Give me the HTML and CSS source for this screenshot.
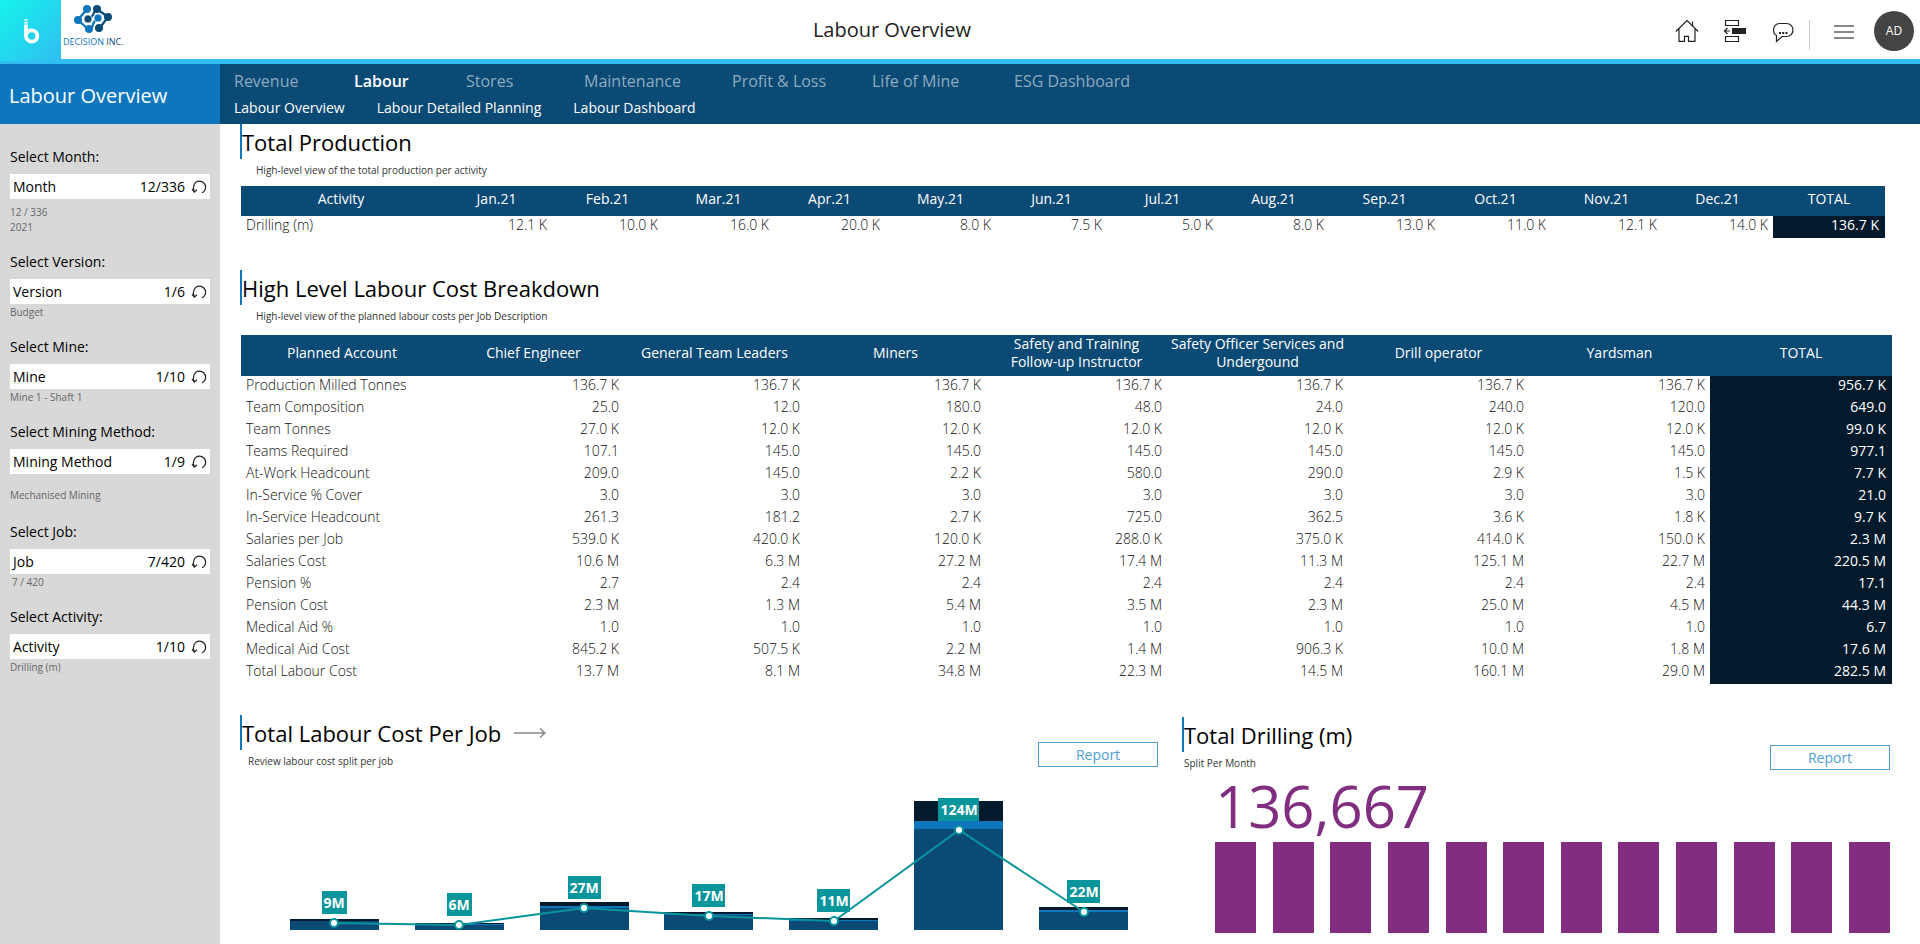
FILE: index.html
```html
<!DOCTYPE html>
<html lang="en">
<head>
<meta charset="utf-8">
<title>Labour Overview</title>
<link rel="stylesheet" href="styles.css">
</head>
<body>
<header class="topbar">
  <div class="brand">
    <a class="brand-tile" href="#" aria-label="Home page">
      <svg width="18" height="26" viewBox="0 0 18 26"><path d="M1.200 1h3.600M1.200 3.800h3.600" stroke="#fff" stroke-width="1.500"/><path d="M3 5.500V17" stroke="#fff" stroke-width="3.800"/><circle cx="8.700" cy="17" r="5.700" fill="none" stroke="#fff" stroke-width="3.800"/></svg>
    </a>
    <a class="company" href="#">
      <svg width="40" height="30" viewBox="0 0 40 30">
        <g fill="none" stroke-width="2.200">
          <path d="M14 5 5 16l11 10c6-2 1-7 9-12" stroke="#0d76bd"/>
          <path d="M24 5l11 8-9 12M24 5c-5 2-1 7-9 10" stroke="#0b4a75"/>
        </g>
        <g fill="#0d76bd"><circle cx="14" cy="5" r="4"/><circle cx="5" cy="16" r="4"/><circle cx="16" cy="25" r="4"/><circle cx="25" cy="14" r="4" stroke="#fff" stroke-width=".6"/></g>
        <g fill="#0b4a75"><circle cx="24" cy="5" r="4"/><circle cx="35" cy="13" r="4"/><circle cx="26" cy="24" r="4"/><circle cx="15" cy="15" r="4" stroke="#fff" stroke-width=".6"/></g>
      </svg>
      <span class="company-name">DECISION <b>INC.</b></span>
    </a>
  </div>
  <h1 class="page-title">Labour Overview</h1>
  <div class="tools">
    <button class="icon-btn" aria-label="Home"><svg width="24" height="24" viewBox="0 0 24 24" fill="none" stroke="#222" stroke-width="1.200"><path d="M.8 12.500 12 1.500l11.200 11M17.500 6.800V2.500M4 10v12.400h5.500v-5h4v5h6.500V10"/></svg></button>
    <button class="icon-btn" aria-label="Structure"><svg width="24" height="24" viewBox="0 0 24 24" fill="none" stroke="#222" stroke-width="1.200"><path d="M2.500 1.500h13v5h-13zM2.500 17.500h13v5h-13zM1.500 12H7M4.500 9l-3 3 3 3"/><path d="M9 9h14v6H9z" fill="#222" stroke="none"/></svg></button>
    <button class="icon-btn" aria-label="Comments"><svg width="24" height="24" viewBox="0 0 24 24" fill="none" stroke="#222" stroke-width="1.200"><path d="M8.500 4.500h7c3.800 0 6.500 2.800 6.500 6.500s-2.700 6.500-6.500 6.500h-4.500L5.500 22.500v-6C3.500 15.500 2.500 13.500 2.500 11c0-3.700 2.300-6.500 6-6.500z"/><path d="M8 14h2M11.200 14h2M14.400 14h2" stroke-width="2"/></svg></button>
    <span class="divider"></span>
    <button class="icon-btn" aria-label="Menu"><svg width="24" height="24" viewBox="0 0 24 24" stroke="#8a8a8a" stroke-width="2"><path d="M2 7h20M2 13h20M2 19h20"/></svg></button>
    <button class="avatar">AD</button>
  </div>
</header>

<div class="navbar">
  <div class="nav-title">Labour Overview</div>
  <div class="nav-links">
    <nav class="nav-main" aria-label="Areas">
      <a href="#">Revenue</a><a href="#" class="active">Labour</a><a href="#">Stores</a><a href="#">Maintenance</a><a href="#">Profit &amp; Loss</a><a href="#">Life of Mine</a><a href="#">ESG Dashboard</a>
    </nav>
    <nav class="nav-sub" aria-label="Labour pages">
      <a href="#">Labour Overview</a><a href="#">Labour Detailed Planning</a><a href="#">Labour Dashboard</a>
    </nav>
  </div>
</div>

<svg class="defs" width="0" height="0"><symbol id="reset" viewBox="0 0 16 16"><path d="M3.200 12.500C.9 8 3.500 2.200 8.400 2.200c3.600 0 6.200 2.700 6.200 6 0 2.500-1.400 4.500-3.600 5.600M1 10.200l2.300 2.900 2.700-2.300" fill="none" stroke="#222" stroke-width="1.200"/></symbol></svg>

<div class="body">
  <aside class="sidebar">
    <section class="filter filter-tall">
      <h2>Select Month:</h2>
      <div class="picker"><button class="pick"><span>Month</span><span>12/336</span></button><button class="reset" aria-label="Reset month"><svg width="16" height="16"><use href="#reset"/></svg></button></div>
      <p class="near">12 / 336<br>2021</p>
    </section>
    <section class="filter">
      <h2>Select Version:</h2>
      <div class="picker"><button class="pick"><span>Version</span><span>1/6</span></button><button class="reset" aria-label="Reset version"><svg width="16" height="16"><use href="#reset"/></svg></button></div>
      <p>Budget</p>
    </section>
    <section class="filter">
      <h2>Select Mine:</h2>
      <div class="picker"><button class="pick"><span>Mine</span><span>1/10</span></button><button class="reset" aria-label="Reset mine"><svg width="16" height="16"><use href="#reset"/></svg></button></div>
      <p>Mine 1 - Shaft 1</p>
    </section>
    <section class="filter filter-mid">
      <h2>Select Mining Method:</h2>
      <div class="picker"><button class="pick"><span>Mining Method</span><span>1/9</span></button><button class="reset" aria-label="Reset mining method"><svg width="16" height="16"><use href="#reset"/></svg></button></div>
      <p class="far">Mechanised Mining</p>
    </section>
    <section class="filter">
      <h2>Select Job:</h2>
      <div class="picker"><button class="pick"><span>Job</span><span>7/420</span></button><button class="reset" aria-label="Reset job"><svg width="16" height="16"><use href="#reset"/></svg></button></div>
      <p class="indent">7 / 420</p>
    </section>
    <section class="filter">
      <h2>Select Activity:</h2>
      <div class="picker"><button class="pick"><span>Activity</span><span>1/10</span></button><button class="reset" aria-label="Reset activity"><svg width="16" height="16"><use href="#reset"/></svg></button></div>
      <p>Drilling (m)</p>
    </section>
  </aside>

  <main class="main">
    <section class="production">
      <h2 class="heading">Total Production</h2>
      <p class="sub sub-far">High-level view of the total production per activity</p>
      <table class="grid grid-production">
        <colgroup><col class="c-name"><col span="12"><col class="c-total"></colgroup>
        <thead><tr><th>Activity</th><th>Jan.21</th><th>Feb.21</th><th>Mar.21</th><th>Apr.21</th><th>May.21</th><th>Jun.21</th><th>Jul.21</th><th>Aug.21</th><th>Sep.21</th><th>Oct.21</th><th>Nov.21</th><th>Dec.21</th><th>TOTAL</th></tr></thead>
        <tbody><tr><td>Drilling (m)</td><td>12.1 K</td><td>10.0 K</td><td>16.0 K</td><td>20.0 K</td><td>8.0 K</td><td>7.5 K</td><td>5.0 K</td><td>8.0 K</td><td>13.0 K</td><td>11.0 K</td><td>12.1 K</td><td>14.0 K</td><td>136.7 K</td></tr></tbody>
      </table>
    </section>

    <section class="breakdown">
      <h2 class="heading">High Level Labour Cost Breakdown</h2>
      <p class="sub sub-far">High-level view of the planned labour costs per Job Description</p>
      <table class="grid grid-breakdown">
        <colgroup><col class="c-name"><col span="7"><col class="c-total"></colgroup>
        <thead><tr><th>Planned Account</th><th>Chief Engineer</th><th>General Team Leaders</th><th>Miners</th><th>Safety and Training <span class="keep">Follow-up</span> Instructor</th><th>Safety Officer Services and Undergound</th><th>Drill operator</th><th>Yardsman</th><th>TOTAL</th></tr></thead>
        <tbody>
          <tr><td>Production Milled Tonnes</td><td>136.7 K</td><td>136.7 K</td><td>136.7 K</td><td>136.7 K</td><td>136.7 K</td><td>136.7 K</td><td>136.7 K</td><td>956.7 K</td></tr>
          <tr><td>Team Composition</td><td>25.0</td><td>12.0</td><td>180.0</td><td>48.0</td><td>24.0</td><td>240.0</td><td>120.0</td><td>649.0</td></tr>
          <tr><td>Team Tonnes</td><td>27.0 K</td><td>12.0 K</td><td>12.0 K</td><td>12.0 K</td><td>12.0 K</td><td>12.0 K</td><td>12.0 K</td><td>99.0 K</td></tr>
          <tr><td>Teams Required</td><td>107.1</td><td>145.0</td><td>145.0</td><td>145.0</td><td>145.0</td><td>145.0</td><td>145.0</td><td>977.1</td></tr>
          <tr><td>At-Work Headcount</td><td>209.0</td><td>145.0</td><td>2.2 K</td><td>580.0</td><td>290.0</td><td>2.9 K</td><td>1.5 K</td><td>7.7 K</td></tr>
          <tr><td>In-Service % Cover</td><td>3.0</td><td>3.0</td><td>3.0</td><td>3.0</td><td>3.0</td><td>3.0</td><td>3.0</td><td>21.0</td></tr>
          <tr><td>In-Service Headcount</td><td>261.3</td><td>181.2</td><td>2.7 K</td><td>725.0</td><td>362.5</td><td>3.6 K</td><td>1.8 K</td><td>9.7 K</td></tr>
          <tr><td>Salaries per Job</td><td>539.0 K</td><td>420.0 K</td><td>120.0 K</td><td>288.0 K</td><td>375.0 K</td><td>414.0 K</td><td>150.0 K</td><td>2.3 M</td></tr>
          <tr><td>Salaries Cost</td><td>10.6 M</td><td>6.3 M</td><td>27.2 M</td><td>17.4 M</td><td>11.3 M</td><td>125.1 M</td><td>22.7 M</td><td>220.5 M</td></tr>
          <tr><td>Pension %</td><td>2.7</td><td>2.4</td><td>2.4</td><td>2.4</td><td>2.4</td><td>2.4</td><td>2.4</td><td>17.1</td></tr>
          <tr><td>Pension Cost</td><td>2.3 M</td><td>1.3 M</td><td>5.4 M</td><td>3.5 M</td><td>2.3 M</td><td>25.0 M</td><td>4.5 M</td><td>44.3 M</td></tr>
          <tr><td>Medical Aid %</td><td>1.0</td><td>1.0</td><td>1.0</td><td>1.0</td><td>1.0</td><td>1.0</td><td>1.0</td><td>6.7</td></tr>
          <tr><td>Medical Aid Cost</td><td>845.2 K</td><td>507.5 K</td><td>2.2 M</td><td>1.4 M</td><td>906.3 K</td><td>10.0 M</td><td>1.8 M</td><td>17.6 M</td></tr>
          <tr><td>Total Labour Cost</td><td>13.7 M</td><td>8.1 M</td><td>34.8 M</td><td>22.3 M</td><td>14.5 M</td><td>160.1 M</td><td>29.0 M</td><td>282.5 M</td></tr>
        </tbody>
      </table>
    </section>

    <div class="charts">
      <section class="cost">
        <div class="chart-head">
          <div>
            <h2 class="heading">Total Labour Cost Per Job
              <svg width="34" height="12" viewBox="0 0 34 12" fill="none" stroke="#888" stroke-width="1.500"><path d="M1 6h31M27 1.500 32 6l-5 4.500"/></svg>
            </h2>
            <p class="sub sub-mid">Review labour cost split per job</p>
          </div>
          <button class="report">Report</button>
        </div>
        <svg class="cost-chart" viewBox="0 0 838 134" role="img" aria-label="Labour cost per job">
          <g fill="#0b4a75"><path d="M0 122h89v10H0zM125 127h89v5h-89zM250 110h89v22h-89zM374 117h89v15h-89zM499 123h89v9h-89zM624 31h89v101h-89zM749 114h89v18h-89z"/></g>
          <g fill="#0d76bd"><path d="M125 126h89v1h-89zM250 108h89v2h-89zM374 116h89v1h-89zM499 122h89v1h-89zM624 23h89v8h-89zM749 112h89v2h-89z"/></g>
          <g fill="#031a2c"><path d="M0 121h89v2H0zM125 125h89v1h-89zM250 104h89v4h-89zM374 114h89v2h-89zM499 120h89v2h-89zM624 3h89v20h-89zM749 109h89v3h-89z"/></g>
          <path d="M44 125l125 2 125-17 125 8 125 5L669 32l125 82" fill="none" stroke="#08959b" stroke-width="2"/>
          <g fill="#fff" stroke="#08959b" stroke-width="2"><circle cx="44" cy="125" r="4"/><circle cx="169" cy="127" r="4"/><circle cx="294" cy="110" r="4"/><circle cx="419" cy="118" r="4"/><circle cx="544" cy="123" r="4"/><circle cx="669" cy="32" r="4"/><circle cx="794" cy="114" r="4"/></g>
          <g fill="#08959b"><path d="M32 93h25v23H32zM157 95h25v23h-25zM278 78h33v23h-33zM402 86h33v23h-33zM527 91h33v23h-33zM648 0h41v23h-41zM777 82h33v23h-33z"/></g>
          <g class="point-labels"><text x="44" y="110">9M</text><text x="169" y="112">6M</text><text x="294" y="95">27M</text><text x="419" y="103">17M</text><text x="544" y="108">11M</text><text x="669" y="17">124M</text><text x="794" y="99">22M</text></g>
        </svg>
      </section>

      <section class="drilling">
        <div class="chart-head">
          <div>
            <h2 class="heading">Total Drilling (m)</h2>
            <p class="sub">Split Per Month</p>
          </div>
          <button class="report">Report</button>
        </div>
        <p class="big">136,667</p>
        <div class="month-bars"><i></i><i></i><i></i><i></i><i></i><i></i><i></i><i></i><i></i><i></i><i></i><i></i></div>
      </section>
    </div>
  </main>
</div>
</body>
</html>
```

FILE: styles.css
```css
* { box-sizing: border-box; }
body {
  margin: 0;
  min-height: 100vh;
  display: flex;
  flex-direction: column;
  font: 14px/20px "Open Sans", "Noto Sans", sans-serif;
  color: #000;
  background: #fff;
}
h1, h2, p { margin: 0; font-weight: 400; }
a { color: inherit; text-decoration: none; }
button { font: inherit; color: inherit; border: 0; padding: 0; background: none; cursor: pointer; }
.defs { position: absolute; }

.topbar {
  display: grid;
  grid-template-columns: 1fr auto 1fr 136px;
  height: 64px;
  border-bottom: 5px solid #31bdf1;
}
.brand { display: flex; }
.brand-tile {
  width: 61px;
  height: 61px;
  padding: 19px 0 0 23px;
  background: linear-gradient(135deg, #15f3ec, #31bdf1);
}
.company { display: flex; flex-direction: column; align-items: center; padding: 4px 0 0 2px; }
.company-name { font-size: 9px; line-height: 12px; padding-top: 2px; color: #0d76bd; }
.company-name b { font-weight: 400; color: #0b4a75; }
.page-title { font-size: 20px; line-height: 59px; color: #222; }
.tools { grid-column: 3 / 5; display: flex; justify-content: flex-end; align-items: center; padding-right: 6px; }
.icon-btn { width: 24px; height: 24px; margin-right: 24px; }
.icon-btn svg { display: block; }
.divider { width: 1px; height: 30px; margin: 8px 22px 0 -10px; background: #ccc; }
.divider + .icon-btn { margin-right: 18px; }
.avatar { width: 40px; height: 40px; border-radius: 50%; background: #444; color: #fff; font-size: 12px; }

.navbar { display: flex; height: 60px; background: #0b4a75; color: #fff; }
.nav-title { width: 220px; padding-left: 9px; font-size: 20px; line-height: 64px; background: #0d76bd; }
.nav-links { padding: 5px 0 0 14px; }
.nav-main {
  display: grid;
  grid-template-columns: 120px 112px 118px 148px 140px 142px auto;
  font-size: 16px;
  line-height: 24px;
  color: #8eaabf;
}
.nav-main .active { color: #fff; font-weight: 600; }
.nav-sub { display: flex; gap: 32px; line-height: 30px; }

.body { flex: 1; display: flex; }
.sidebar { width: 220px; flex: none; padding: 23px 10px 0; background: #d8d8d8; }
.filter { height: 85px; }
.filter-tall { height: 105px; }
.filter-mid { height: 100px; }
.filter h2 { font-size: 14px; line-height: 20px; padding-bottom: 7px; }
.filter p { font-size: 10px; line-height: 15px; color: #666; padding-top: 1px; }
.filter .near { padding-top: 6px; }
.filter .far { padding-top: 14px; }
.filter .indent { padding-left: 2px; }
.picker { display: flex; height: 25px; background: #fff; }
.pick { flex: 1; display: flex; justify-content: space-between; align-items: center; padding: 0 6px 0 3px; }
.reset { width: 16px; margin-right: 3px; }
.reset svg { display: block; }

.main { flex: 1; min-width: 0; padding-left: 20px; }
.heading {
  display: flex;
  align-items: center;
  gap: 12px;
  height: 35px;
  padding-top: 1px;
  border-left: 2px solid #0d76bd;
  font-size: 22px;
  line-height: 32px;
}
.sub { font-size: 10px; line-height: 15px; padding: 4px 0 0 2px; color: #333; }
.sub-far { padding-left: 16px; }
.sub-mid { padding-left: 8px; }

.grid { border-collapse: collapse; table-layout: fixed; }
.grid th { background: #0b4a75; color: #fff; font-weight: 400; line-height: 19px; padding: 0 2px; }
.grid td { height: 22px; padding: 0 5px; line-height: 18px; vertical-align: top; text-align: right; font-weight: 300; color: #111; }
.grid td:first-child { text-align: left; }
.grid td:last-child { background: #031a2c; color: #fff; font-weight: 400; padding-right: 6px; }
.grid-production { width: calc(100% - 36px); margin: 8px 35px 32px 1px; }
.grid-production th { height: 30px; padding-bottom: 6px; }
.grid-production .c-name { width: 200px; }
.grid-production .c-total { width: 112px; }
.grid-breakdown { width: calc(100% - 29px); margin: 11px 28px 31px 1px; }
.grid-breakdown th { height: 41px; padding-bottom: 3px; line-height: 18px; padding-bottom: 5px; }
.keep { white-space: nowrap; }
.grid-breakdown .c-name { width: 202px; }
.grid-breakdown .c-total { width: 182px; }

.charts { display: grid; grid-template-columns: 918fr 708fr; column-gap: 24px; padding-right: 30px; }
.chart-head { display: flex; justify-content: space-between; align-items: flex-start; }
.report { width: 120px; height: 25px; margin-top: 27px; border: 1px solid #4f9dd3; color: #4f9dd3; }
.cost-chart { display: block; width: calc(100% - 80px); margin: 29px 30px 0 50px; }
.point-labels { fill: #fff; font-size: 14px; font-weight: 700; text-anchor: middle; }
.drilling { padding-top: 2px; }
.drilling .report { margin-top: 28px; }
.big { font-size: 58px; line-height: 64px; padding: 3px 0 0 33px; color: #812e80; }
.month-bars { display: flex; justify-content: space-between; height: 91px; margin: 4px 0 0 33px; }
.month-bars i { width: 41px; background: #812e80; }
```
